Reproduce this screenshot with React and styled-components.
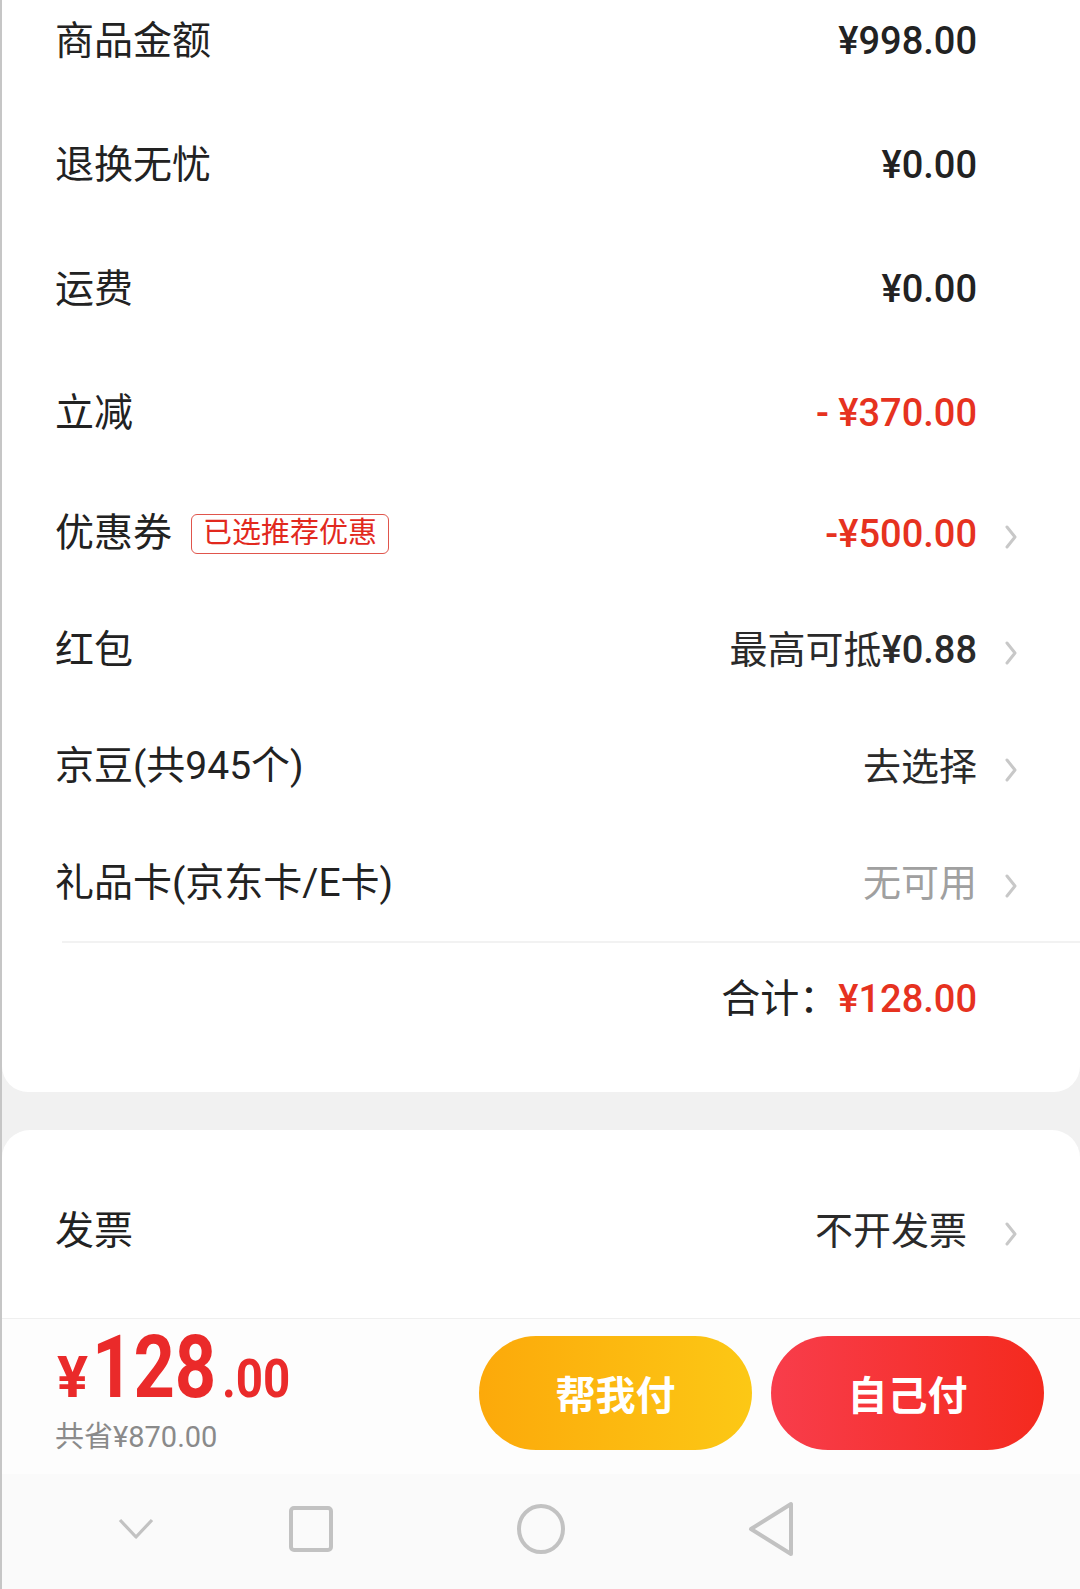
import React from "react";
import styled, { createGlobalStyle } from "styled-components";

const GlobalStyle = createGlobalStyle`
  html, body {
    margin: 0;
    padding: 0;
    background: #f1f1f1;
  }
  body {
    font-family: Roboto, "Noto Sans CJK SC", sans-serif;
  }
`;

const Page = styled.div`
  width: 1080px;
  height: 1589px;
  overflow: hidden;
  box-sizing: border-box;
  border-left: 2px solid #c6c6c6;
  background: #f1f1f1;
  display: flex;
  flex-direction: column;
`;

const Card = styled.section`
  flex-shrink: 0;
  background: #fff;
  border-radius: ${(p) => (p.$top ? "28px 28px 0 0" : "0 0 26px 26px")};
  margin-top: ${(p) => p.$offset || 0}px;
  padding-top: ${(p) => p.$padTop || 0}px;
  padding-bottom: ${(p) => p.$padBottom || 0}px;
  height: ${(p) => (p.$height ? `${p.$height}px` : "auto")};
  box-sizing: border-box;
`;

const Row = styled.div`
  height: ${(p) => p.$h}px;
  display: flex;
  align-items: center;
  padding: 0 63px 0 53px;
`;

const Label = styled.span`
  font-size: 39px;
  line-height: 1;
  color: #222;
  display: flex;
  align-items: center;
`;

const Badge = styled.span`
  margin-left: 19px;
  height: 40px;
  box-sizing: border-box;
  padding: 0 11px;
  display: inline-flex;
  align-items: center;
  border: 1px solid #e0554c;
  border-radius: 6px;
  font-size: 29px;
  color: #e2291e;
`;

const Value = styled.span`
  margin-left: auto;
  margin-right: ${(p) => p.$shift || 0}px;
  font-size: 38px;
  line-height: 1;
  font-weight: ${(p) => (p.$strong ? 500 : 400)};
  color: ${(p) => p.$color || "#222"};
  white-space: nowrap;
`;

const Num = styled.span`
  font-weight: 500;
`;

const ArrowSlot = styled.span`
  width: 40px;
  display: flex;
  justify-content: flex-end;
  align-items: center;
  padding-top: 6px;
`;

const TotalRow = styled.div`
  margin-left: 60px;
  height: 112px;
  border-top: 2px solid #f2f2f2;
  display: flex;
  align-items: center;
  justify-content: flex-end;
  padding-right: 103px;
  font-size: 39px;
  line-height: 1;
  color: #222;
`;

const TotalAmount = styled.span`
  font-size: 38px;
  font-weight: 500;
  color: #e6321f;
`;

const Bar = styled.div`
  flex-shrink: 0;
  height: 156px;
  box-sizing: border-box;
  border-top: 1px solid #efefef;
  background: #fdfdfd;
  display: flex;
  align-items: center;
  padding: 0 36px 8px 53px;
`;

const PriceBlock = styled.div`
  display: flex;
  flex-direction: column;
`;

const PriceLine = styled.div`
  display: flex;
  align-items: baseline;
  color: #ea2a2a;
  font-family: Roboto, sans-serif;
  font-weight: 700;
  line-height: 76px;
`;

const Yen = styled.span`
  font-size: 58px;
  margin-left: 2px;
  margin-right: 4px;
`;

/* the app's price font is a narrow one: squeeze Roboto to match */
const Squeezed = styled.span`
  display: inline-block;
  font-size: ${(p) => p.$size}px;
  transform: scaleX(${(p) => p.$scale});
  transform-origin: left bottom;
  margin-right: ${(p) => p.$pull || 0}px;
`;

const Saved = styled.div`
  font-size: 29px;
  color: #8a8a8a;
  line-height: 40px;
`;

const Buttons = styled.div`
  margin-left: auto;
  display: flex;
  gap: 19px;
`;

const PayButton = styled.button`
  width: 273px;
  height: 114px;
  border: none;
  border-radius: 57px;
  background: ${(p) =>
    p.$variant === "friend"
      ? "linear-gradient(90deg, #fca90a, #fcc815)"
      : "linear-gradient(90deg, #f83d4b, #f42a1e)"};
  color: #fff;
  font-family: "Noto Sans CJK SC", sans-serif;
  font-size: 40px;
  font-weight: 700;
  padding: 0;
`;

const Nav = styled.nav`
  flex: 1;
  background: #fafafa;
  display: grid;
  grid-template-columns: 194px 230px 230px 230px;
  align-items: center;
  padding-bottom: 6px;
`;

const NavCell = styled.div`
  display: flex;
  justify-content: ${(p) => (p.$start ? "flex-start" : "center")};
  padding-left: ${(p) => (p.$start ? 115 : 0)}px;
`;

const Chevron = () => (
  <svg width="12" height="24" viewBox="0 0 12 24">
    <polyline
      points="2,2 10,12 2,22"
      fill="none"
      stroke="#c8c8c8"
      strokeWidth="3"
      strokeLinecap="round"
      strokeLinejoin="round"
    />
  </svg>
);

const rows = [
  { label: "商品金额", value: "¥998.00", h: 124, strong: true },
  { label: "退换无忧", value: "¥0.00", h: 124, strong: true },
  { label: "运费", value: "¥0.00", h: 124, strong: true },
  { label: "立减", value: "- ¥370.00", h: 124, strong: true, color: "#e6321f" },
  { label: "优惠券", badge: "已选推荐优惠", value: "-¥500.00", h: 117, strong: true, color: "#e6321f", arrow: true },
  { label: "红包", value: <>最高可抵<Num>¥0.88</Num></>, h: 116, color: "#2a2a2a", arrow: true },
  { label: "京豆(共945个)", value: "去选择", h: 117, color: "#2a2a2a", arrow: true },
  { label: "礼品卡(京东卡/E卡)", value: "无可用", h: 116, color: "#a0a0a0", arrow: true },
];

const App = () => {
  return (
    <Page>
      <GlobalStyle />
      <Card $offset={-21} $padBottom={37}>
        {rows.map((r) => (
          <Row key={r.label} $h={r.h}>
            <Label>
              {r.label}
              {r.badge && <Badge>{r.badge}</Badge>}
            </Label>
            <Value $strong={r.strong} $color={r.color}>{r.value}</Value>
            <ArrowSlot>{r.arrow && <Chevron />}</ArrowSlot>
          </Row>
        ))}
        <TotalRow>
          合计：<TotalAmount>¥128.00</TotalAmount>
        </TotalRow>
      </Card>

      <Card $top $offset={38} $padTop={40} $height={188}>
        <Row $h={122}>
          <Label>发票</Label>
          <Value $color="#2a2a2a" $shift={10}>不开发票</Value>
          <ArrowSlot><Chevron /></ArrowSlot>
        </Row>
      </Card>

      <Bar>
        <PriceBlock>
          <PriceLine>
            <Yen>¥</Yen>
            <Squeezed $size={88} $scale={0.82} $pull={-22}>128</Squeezed>
            <Squeezed $size={54} $scale={0.88}>.00</Squeezed>
          </PriceLine>
          <Saved>共省¥870.00</Saved>
        </PriceBlock>
        <Buttons>
          <PayButton $variant="friend">帮我付</PayButton>
          <PayButton>自己付</PayButton>
        </Buttons>
      </Bar>

      <Nav>
        <NavCell $start>
          <svg width="38" height="24" viewBox="0 0 38 24">
            <polyline points="3,3 19,20 35,3" fill="none" stroke="#c2c2c2" strokeWidth="3.2" strokeLinejoin="round" />
          </svg>
        </NavCell>
        <NavCell>
          <svg width="46" height="48" viewBox="0 0 46 48">
            <rect x="3" y="3" width="40" height="42" rx="3" fill="none" stroke="#c2c2c2" strokeWidth="4" />
          </svg>
        </NavCell>
        <NavCell>
          <svg width="50" height="52" viewBox="0 0 50 52">
            <ellipse cx="25" cy="26" rx="22" ry="23" fill="none" stroke="#c2c2c2" strokeWidth="4" />
          </svg>
        </NavCell>
        <NavCell>
          <svg width="48" height="56" viewBox="0 0 48 56">
            <polygon points="4,28 44,3 44,53" fill="none" stroke="#c2c2c2" strokeWidth="4" strokeLinejoin="round" />
          </svg>
        </NavCell>
      </Nav>
    </Page>
  );
};

export default App;
